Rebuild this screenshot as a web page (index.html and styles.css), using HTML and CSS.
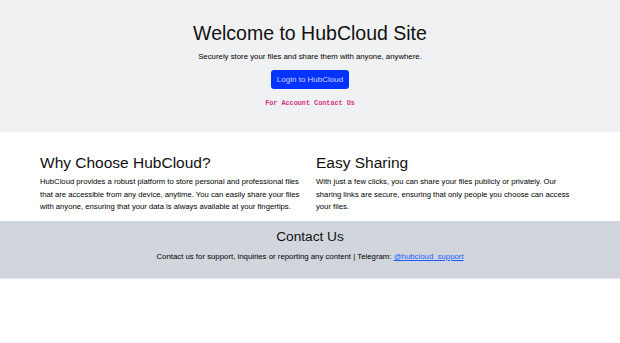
FILE: index.html
```html
<!DOCTYPE html>
<html lang="en">
<head>
<meta charset="utf-8">
<title>HubCloud</title>
<link rel="stylesheet" href="styles.css">
</head>
<body>
<header class="hero">
  <h1 class="hero-title">Welcome to HubCloud Site</h1>
  <p class="hero-lead">Securely store your files and share them with anyone, anywhere.</p>
  <a class="btn" href="#">Login to HubCloud</a>
  <code class="hero-code">For Account Contact Us</code>
</header>
<main class="features">
  <section class="feature">
    <h2 class="feature-title">Why Choose HubCloud?</h2>
    <p class="feature-text">HubCloud provides a robust platform to store personal and professional files that are accessible from any device, anytime. You can easily share your files with anyone, ensuring that your data is always available at your fingertips.</p>
  </section>
  <section class="feature">
    <h2 class="feature-title">Easy Sharing</h2>
    <p class="feature-text">With just a few clicks, you can share your files publicly or privately. Our sharing links are secure, ensuring that only people you choose can access your files.</p>
  </section>
</main>
<footer class="contact">
  <h2 class="contact-title">Contact Us</h2>
  <p class="contact-text">Contact us for support, inquiries or reporting any content | Telegram: <a class="contact-link" href="#">@hubcloud_support</a></p>
</footer>
</body>
</html>
```
FILE: styles.css
```css
* { box-sizing: border-box; }
html, body { margin: 0; padding: 0; background: #fff; }
body {
  font-family: "Liberation Sans", Arial, sans-serif;
  color: #000;
  font-size: 7.7px;
  line-height: 1.65;
}
.hero {
  background: #f0f1f3;
  height: 132px;
  display: flex;
  flex-direction: column;
  align-items: center;
  padding-top: 21px;
}
.hero-title {
  margin: 0;
  font-size: 19.5px;
  font-weight: 400;
  line-height: 25px;
  color: #111;
}
.hero-lead {
  margin: 5px 0 0;
  font-size: 7.8px;
  line-height: 12px;
  font-weight: 400;
}
.btn {
  margin-top: 7px;
  display: inline-block;
  background: #0433ff;
  color: #c9d4ff;
  text-decoration: none;
  font-size: 8px;
  line-height: 19px;
  padding: 0 6px;
  border-radius: 3px;
}
.hero-code {
  margin-top: 8px;
  font-family: "Liberation Mono", "DejaVu Sans Mono", monospace;
  font-size: 6.8px;
  font-weight: 700;
  color: #d63384;
  line-height: 12px;
}
.features {
  display: grid;
  grid-template-columns: 1fr 1fr;
  column-gap: 12px;
  padding: 20px 40px 0;
  height: 89px;
}
.feature-title {
  margin: 0;
  font-size: 15.5px;
  font-weight: 400;
  line-height: 22px;
  color: #111;
}
.feature-text {
  margin: 2px 0 0;
  font-size: 7.7px;
  line-height: 12.5px;
}
.contact {
  background: #d1d6dd;
  height: 58px;
  text-align: center;
  padding-top: 7px;
  border-bottom: 1px solid #e4e7eb;
}
.contact-title {
  margin: 0;
  font-size: 13.7px;
  font-weight: 400;
  line-height: 17px;
  color: #111;
}
.contact-text {
  margin: 6px 0 0;
  font-size: 7.8px;
  line-height: 12px;
}
.contact-link { color: #1a5cff; }
```
